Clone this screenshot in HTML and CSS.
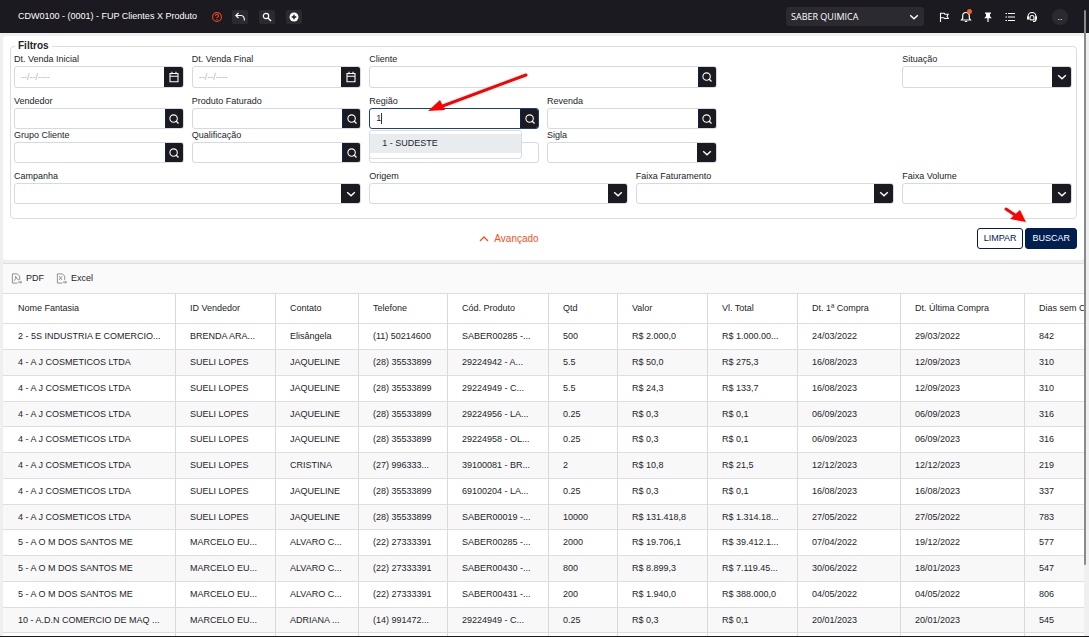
FILE: index.html
```html
<!DOCTYPE html>
<html lang="pt-BR">
<head>
<meta charset="utf-8">
<title>FUP Clientes X Produto</title>
<link rel="stylesheet" href="styles.css">
</head>
<body>
<svg class="sprite" aria-hidden="true">
  <symbol id="lens" viewBox="0 0 12 12"><circle cx="5.600" cy="5.600" r="3.700" fill="none" stroke="currentColor" stroke-width="1.100"/><path d="M8 8 10.500 10.500" stroke="currentColor" stroke-width="1.300"/></symbol>
  <symbol id="chev" viewBox="0 0 12 12"><path d="M2.2 4.2 6 7.8 9.8 4.2" fill="none" stroke="currentColor" stroke-width="1.4"/></symbol>
  <symbol id="cal" viewBox="0 0 12 12"><path d="M2 2.5h8v8.3H2zM2 5.3h8M4 .8v2.4M8 .8v2.4" fill="none" stroke="currentColor" stroke-width="1.1"/></symbol>
</svg>
<header class="topbar">
  <h1 class="title">CDW0100 - (0001) - FUP Clientes X Produto</h1>
  <button class="help" aria-label="Ajuda"><svg viewBox="0 0 12 12"><circle cx="6" cy="6" r="4.4" fill="none" stroke="currentColor" stroke-width="1.1"/><path d="M4.5 5a1.5 1.4 0 1 1 2.1 1.2Q6 6.500 6 7.200M6 8v1" fill="none" stroke="currentColor" stroke-width="1.1"/></svg></button>
  <button class="tool" aria-label="Voltar"><svg viewBox="0 0 12 12"><path d="M4.500 2 1.800 4.500 4.500 7M2 4.500h5.200Q10.400 4.800 10.400 9.500" fill="none" stroke="currentColor" stroke-width="1.100"/></svg></button>
  <button class="tool" aria-label="Pesquisar"><svg viewBox="0 0 12 12"><circle cx="5" cy="5" r="2.700" fill="none" stroke="currentColor" stroke-width="1.200"/><path d="m7 7 3 3" stroke="currentColor" stroke-width="1.400"/></svg></button>
  <button class="tool" aria-label="Adicionar"><svg viewBox="0 0 12 12"><circle cx="6" cy="6" r="4.500" fill="currentColor"/><path d="M6 3.700v4.600M3.700 6h4.600" stroke="#1b1a20" stroke-width="1.400"/></svg></button>
  <div class="company">
    <select aria-label="Empresa"><option>SABER QUIMICA</option></select>
    <svg viewBox="0 0 12 12"><use href="#chev"/></svg>
  </div>
  <nav class="actions">
    <button aria-label="Bandeira"><svg viewBox="0 0 12 12"><path d="M2.500 11V2.200h3.800l.6 1h3.300L9 5.300l1.200 2.200H6.500l-.6-.8H2.500" fill="none" stroke="currentColor" stroke-width="1.100"/></svg></button>
    <button aria-label="Notificações" class="bell"><svg viewBox="0 0 12 12"><path d="M1.500 9h9L9.300 7.300V4.800a3.300 3.300 0 0 0-6.600 0v2.500zM4.800 10.500h2.400" fill="none" stroke="currentColor" stroke-width="1.200"/></svg><i></i></button>
    <button aria-label="Fixar"><svg viewBox="0 0 12 12"><path d="M3 1.500h6v1.300H8v2.400l1.800 2H2.200l1.800-2V2.800H3z" fill="currentColor"/><path d="M6 7v4" stroke="currentColor" stroke-width="1.200"/></svg></button>
    <button aria-label="Lista"><svg viewBox="0 0 12 12"><path d="M1.500 2.500h1.500M4 2.500h7M1.500 6h1.500M4 6h7M1.500 9.500h1.500M4 9.500h7" stroke="currentColor" stroke-width="1.200"/></svg></button>
    <button aria-label="Suporte"><svg viewBox="0 0 12 12"><path d="M2 8V5.500a4 4 0 0 1 8 0V8.500Q10 10.500 7 10.500M4 6q0-1.500 2-1.500T8 6M4 6v2.500q2 1 4 0V6" fill="none" stroke="currentColor" stroke-width="1.100"/><path d="M1 5.500h2v3H1zM9 5.500h2v3H9z" fill="currentColor"/></svg></button>
    <button class="avatar" aria-label="Usuário">..</button>
  </nav>
</header>
<main class="page">
  <form class="panel">
    <fieldset class="filters">
      <legend>Filtros</legend>
      <div class="row tall">
        <div class="field s2"><label for="f1">Dt. Venda Inicial</label><div class="box"><input id="f1" placeholder="--/--/----"><button type="button" class="pick" aria-label="Abrir calendário"><svg><use href="#cal"/></svg></button></div></div>
        <div class="field s2"><label for="f2">Dt. Venda Final</label><div class="box"><input id="f2" placeholder="--/--/----"><button type="button" class="pick" aria-label="Abrir calendário"><svg><use href="#cal"/></svg></button></div></div>
        <div class="field s4"><label for="f3">Cliente</label><div class="box"><input id="f3"><button type="button" class="pick find" aria-label="Buscar cliente"><svg><use href="#lens"/></svg></button></div></div>
        <div class="field s2 last"><label for="f4">Situação</label><div class="box"><select id="f4"></select><span class="pick"><svg><use href="#chev"/></svg></span></div></div>
      </div>
      <div class="row spaced">
        <div class="field s2"><label for="f5">Vendedor</label><div class="box"><input id="f5"><button type="button" class="pick find" aria-label="Buscar vendedor"><svg><use href="#lens"/></svg></button></div></div>
        <div class="field s2"><label for="f6">Produto Faturado</label><div class="box"><input id="f6"><button type="button" class="pick find" aria-label="Buscar produto"><svg><use href="#lens"/></svg></button></div></div>
        <div class="field s2"><label for="f7">Região</label><div class="box active"><input id="f7" value="1"><i class="caret"></i><button type="button" class="pick find" aria-label="Buscar região"><svg><use href="#lens"/></svg></button></div>
          <ul class="suggest"><li>1 - SUDESTE</li></ul></div>
        <div class="field s2"><label for="f8">Revenda</label><div class="box"><input id="f8"><button type="button" class="pick find" aria-label="Buscar revenda"><svg><use href="#lens"/></svg></button></div></div>
      </div>
      <div class="row">
        <div class="field s2"><label for="f9">Grupo Cliente</label><div class="box"><input id="f9"><button type="button" class="pick find" aria-label="Buscar grupo"><svg><use href="#lens"/></svg></button></div></div>
        <div class="field s2"><label for="f10">Qualificação</label><div class="box"><input id="f10"><button type="button" class="pick find" aria-label="Buscar qualificação"><svg><use href="#lens"/></svg></button></div></div>
        <div class="field s2 bare"><div class="box"><input aria-label="Filtro"></div></div>
        <div class="field s2"><label for="f11">Sigla</label><div class="box"><select id="f11"></select><span class="pick"><svg><use href="#chev"/></svg></span></div></div>
      </div>
      <div class="row spaced">
        <div class="field s4"><label for="f12">Campanha</label><div class="box"><select id="f12"></select><span class="pick"><svg><use href="#chev"/></svg></span></div></div>
        <div class="field s3"><label for="f13">Origem</label><div class="box"><select id="f13"></select><span class="pick"><svg><use href="#chev"/></svg></span></div></div>
        <div class="field s3"><label for="f14">Faixa Faturamento</label><div class="box"><select id="f14"></select><span class="pick"><svg><use href="#chev"/></svg></span></div></div>
        <div class="field s2"><label for="f15">Faixa Volume</label><div class="box"><select id="f15"></select><span class="pick"><svg><use href="#chev"/></svg></span></div></div>
      </div>
    </fieldset>
    <div class="foot">
      <button type="button" class="advanced"><svg viewBox="0 0 12 12"><path d="M2 8 6 4l4 4" fill="none" stroke="currentColor" stroke-width="1.300"/></svg>Avançado</button>
      <div class="submit"><button type="reset" class="btn">LIMPAR</button><button type="button" class="btn primary">BUSCAR</button></div>
    </div>
    <svg class="arrow long" viewBox="0 0 100 40"><path d="M98 3 12 35" stroke="red" stroke-width="3" stroke-linecap="round"/><path d="M0 39 12 28 17 38z" fill="red"/></svg>
    <svg class="arrow short" viewBox="0 0 22 16"><path d="m2 2 9 6" stroke="red" stroke-width="3" stroke-linecap="round"/><path d="M22 15 16 3 6 12z" fill="red"/></svg>
  </form>
  <section class="grid">
    <div class="export">
      <button><svg viewBox="0 0 12 12"><path d="M9.500 7.500V3.500L7 1H1.500v10H7M3.500 8.500Q6 6 5 3.500 6 7 8.500 7.500M7.500 10h4M10 8.500 11.500 10 10 11.500" fill="none" stroke="currentColor"/></svg>PDF</button>
      <button><svg viewBox="0 0 12 12"><path d="M9.500 7.500V3.500L7 1H1.500v10H7M3.500 3.500l3 4M6.500 3.500l-3 4M7.500 10h4M10 8.500 11.500 10 10 11.500" fill="none" stroke="currentColor"/></svg>Excel</button>
    </div>
    <table>
      <colgroup><col class="c1"><col class="c2"><col class="c3"><col class="c4"><col class="c5"><col class="c6"><col class="c7"><col class="c8"><col class="c9"><col class="c10"><col class="c11"></colgroup>
      <thead><tr><th>Nome Fantasia</th><th>ID Vendedor</th><th>Contato</th><th>Telefone</th><th>Cód. Produto</th><th>Qtd</th><th>Valor</th><th>Vl. Total</th><th>Dt. 1ª Compra</th><th>Dt. Última Compra</th><th>Dias sem C</th></tr></thead>
      <tbody>
        <tr><td>2 - 5S INDUSTRIA E COMERCIO...</td><td>BRENDA ARA...</td><td>Elisângela</td><td>(11) 50214600</td><td>SABER00285 -...</td><td>500</td><td>R$ 2.000,0</td><td>R$ 1.000.00...</td><td>24/03/2022</td><td>29/03/2022</td><td>842</td></tr>
        <tr><td>4 - A J COSMETICOS LTDA</td><td>SUELI LOPES</td><td>JAQUELINE</td><td>(28) 35533899</td><td>29224942 - A...</td><td>5.5</td><td>R$ 50,0</td><td>R$ 275,3</td><td>16/08/2023</td><td>12/09/2023</td><td>310</td></tr>
        <tr><td>4 - A J COSMETICOS LTDA</td><td>SUELI LOPES</td><td>JAQUELINE</td><td>(28) 35533899</td><td>29224949 - C...</td><td>5.5</td><td>R$ 24,3</td><td>R$ 133,7</td><td>16/08/2023</td><td>12/09/2023</td><td>310</td></tr>
        <tr><td>4 - A J COSMETICOS LTDA</td><td>SUELI LOPES</td><td>JAQUELINE</td><td>(28) 35533899</td><td>29224956 - LA...</td><td>0.25</td><td>R$ 0,3</td><td>R$ 0,1</td><td>06/09/2023</td><td>06/09/2023</td><td>316</td></tr>
        <tr><td>4 - A J COSMETICOS LTDA</td><td>SUELI LOPES</td><td>JAQUELINE</td><td>(28) 35533899</td><td>29224958 - OL...</td><td>0.25</td><td>R$ 0,3</td><td>R$ 0,1</td><td>06/09/2023</td><td>06/09/2023</td><td>316</td></tr>
        <tr><td>4 - A J COSMETICOS LTDA</td><td>SUELI LOPES</td><td>CRISTINA</td><td>(27) 996333...</td><td>39100081 - BR...</td><td>2</td><td>R$ 10,8</td><td>R$ 21,5</td><td>12/12/2023</td><td>12/12/2023</td><td>219</td></tr>
        <tr><td>4 - A J COSMETICOS LTDA</td><td>SUELI LOPES</td><td>JAQUELINE</td><td>(28) 35533899</td><td>69100204 - LA...</td><td>0.25</td><td>R$ 0,3</td><td>R$ 0,1</td><td>16/08/2023</td><td>16/08/2023</td><td>337</td></tr>
        <tr><td>4 - A J COSMETICOS LTDA</td><td>SUELI LOPES</td><td>JAQUELINE</td><td>(28) 35533899</td><td>SABER00019 -...</td><td>10000</td><td>R$ 131.418,8</td><td>R$ 1.314.18...</td><td>27/05/2022</td><td>27/05/2022</td><td>783</td></tr>
        <tr><td>5 - A O M DOS SANTOS ME</td><td>MARCELO EU...</td><td>ALVARO C...</td><td>(22) 27333391</td><td>SABER00285 -...</td><td>2000</td><td>R$ 19.706,1</td><td>R$ 39.412.1...</td><td>07/04/2022</td><td>19/12/2022</td><td>577</td></tr>
        <tr><td>5 - A O M DOS SANTOS ME</td><td>MARCELO EU...</td><td>ALVARO C...</td><td>(22) 27333391</td><td>SABER00430 -...</td><td>800</td><td>R$ 8.899,3</td><td>R$ 7.119.45...</td><td>30/06/2022</td><td>18/01/2023</td><td>547</td></tr>
        <tr><td>5 - A O M DOS SANTOS ME</td><td>MARCELO EU...</td><td>ALVARO C...</td><td>(22) 27333391</td><td>SABER00431 -...</td><td>200</td><td>R$ 1.940,0</td><td>R$ 388.000,0</td><td>04/05/2022</td><td>04/05/2022</td><td>806</td></tr>
        <tr><td>10 - A.D.N COMERCIO DE MAQ ...</td><td>MARCELO EU...</td><td>ADRIANA ...</td><td>(14) 991472...</td><td>29224949 - C...</td><td>0.25</td><td>R$ 0,3</td><td>R$ 0,1</td><td>20/01/2023</td><td>20/01/2023</td><td>545</td></tr>
        <tr><td></td><td></td><td></td><td></td><td></td><td></td><td></td><td></td><td></td><td></td><td></td></tr>
      </tbody>
    </table>
  </section>
</main>
<div class="thumb"></div>
</body>
</html>
```
FILE: styles.css
```css
* { box-sizing: border-box; }
body {
  margin: 0;
  height: 100vh;
  display: flex;
  flex-direction: column;
  overflow: hidden;
  position: relative;
  background: #efefef;
  border-bottom: 1px solid #1b1a20;
  color: #222529;
  font: 9px/13px "Liberation Sans", Arial, sans-serif;
}
button, input, select { font: inherit; color: inherit; margin: 0; padding: 0; border: 0; background: none; }
svg { display: block; width: 12px; height: 12px; flex: none; }
.sprite { position: absolute; width: 0; height: 0; }

.topbar {
  flex: none;
  height: 33px;
  display: flex;
  align-items: center;
  padding: 0 21px 0 18px;
  background: #1b1a20;
  color: #fff;
}
.title { margin: 0 14px 0 0; font-size: 9px; font-weight: 400; white-space: nowrap; }
.help { color: #e8461c; margin-right: 9px; }
.tool {
  display: grid;
  place-items: center;
  width: 16px;
  height: 14px;
  margin-right: 11px;
  border-radius: 2px;
  background: #2b2a31;
}
.company {
  display: flex;
  align-items: center;
  width: 138px;
  height: 19px;
  margin-left: auto;
  padding: 0 4px 0 5px;
  border-radius: 3px;
  background: #2b2a31;
  font-family: "Open Sans", sans-serif;
}
.company select { flex: 1; min-width: 0; appearance: none; }
.actions { display: flex; align-items: center; gap: 10px; margin-left: 14px; }
.bell { position: relative; }
.bell i { position: absolute; top: -2px; right: 0; width: 5px; height: 5px; border-radius: 50%; background: #ff5a1f; }
.avatar { width: 16px; height: 16px; margin-left: 4px; border-radius: 50%; background: #2b2a31; line-height: 16px; }

.page { flex: 1; min-height: 0; display: flex; flex-direction: column; padding: 3px 5px 0 3px; }
.panel {
  position: relative;
  flex: none;
  padding: 3px 7px 11px;
  background: #fff;
  border-radius: 3px;
  margin-bottom: 3px;
}
.filters { min-width: 0; margin: 0; padding: 0 4px 14px 3px; border: 1px solid #ddd; border-radius: 4px; }
legend { margin-left: 1px; padding: 0 3px; font-size: 10px; font-weight: 700; line-height: 14px; }
.row { display: grid; grid-template-columns: repeat(12, 1fr); column-gap: 8px; }
.row.spaced { margin-top: 7px; }
.field { position: relative; display: flex; flex-direction: column; min-width: 0; }
.s2 { grid-column: span 2; }
.s3 { grid-column: span 3; }
.s4 { grid-column: span 4; }
.last { grid-column: 11 / span 2; }
.bare { justify-content: flex-end; }
.box { display: flex; height: 21px; border: 1px solid #d3dae1; border-radius: 3px; background: #fff; overflow: hidden; }
.tall .box { height: 22px; }
.box input, .box select { flex: 1; width: 0; min-width: 0; padding: 0 6px; appearance: none; outline: 0; }
.box input::placeholder { color: #b0b4b9; }
.pick { display: grid; place-items: center; width: 20px; margin: -1px; background: #1b1a20; color: #fff; border-radius: 0 3px 3px 0; }
.find { width: 19px; border: 1px solid #0a2459; }
.active { position: relative; border-color: #1d3f7c; }
.caret { position: absolute; left: 11px; top: 4px; width: 1px; height: 11px; background: #333; }
.suggest {
  position: absolute;
  z-index: 2;
  top: 35px;
  left: 0;
  right: 17px;
  margin: 0;
  padding: 3px 0 5px;
  list-style: none;
  background: #fff;
  border: 1px solid #dcdcdc;
  border-radius: 3px;
}
.suggest li { padding: 3px 12px; background: #e9ecef; }

.foot { display: grid; grid-template-columns: 1fr auto 1fr; align-items: center; padding-top: 9px; }
.advanced { grid-column: 2; display: flex; align-items: center; gap: 4px; margin-right: 70px; color: #f4511e; font-size: 10px; }
.submit { display: flex; justify-content: flex-end; gap: 2px; }
.btn { height: 21px; padding: 0 6px; border: 1px solid #001e50; border-radius: 3px; color: #001e50; background: #fff; }
.primary { background: #001e50; color: #fff; }
.arrow { position: absolute; z-index: 3; overflow: visible; fill: none; }
.long { left: 425px; top: 36px; width: 100px; height: 40px; }
.short { left: 1001px; top: 171px; width: 22px; height: 16px; }

.grid { flex: 1; min-height: 0; overflow: hidden; background: #fff; border-top: 1px solid #dedede; }
.export { display: flex; align-items: center; gap: 12px; height: 30px; padding: 0 8px; background: #fafafa; border-bottom: 1px solid #dedede; }
.export button { display: flex; align-items: center; gap: 4px; }
.export svg { width: 11px; height: 11px; color: #888; }
table { width: 1122px; table-layout: fixed; border-collapse: separate; border-spacing: 0; }
th, td {
  padding: 0 0 0 14px;
  border-right: 1px solid #dadada;
  border-bottom: 1px solid #dedede;
  text-align: left;
  font-weight: 400;
  white-space: nowrap;
  overflow: hidden;
}
th:first-child, td:first-child { padding-left: 15px; }
th { height: 30px; }
td { height: 26px; }
tbody tr:nth-child(4n) td { height: 25px; }
tbody tr:nth-child(even) { background: #f8f8f8; }
.c1 { width: 173px; }
.c2 { width: 100px; }
.c3 { width: 83px; }
.c4 { width: 89px; }
.c5 { width: 101px; }
.c6 { width: 69px; }
.c7 { width: 90px; }
.c8 { width: 90px; }
.c9 { width: 103px; }
.c10 { width: 124px; }
.c11 { width: 100px; }
.thumb { position: absolute; z-index: 4; top: 10px; right: 3px; width: 2px; height: 555px; border-radius: 1px; background: #8a8a8a; }
```
